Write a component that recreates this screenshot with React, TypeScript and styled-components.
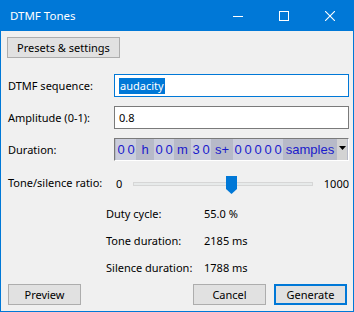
import styled, { createGlobalStyle } from "styled-components";

const GlobalStyle = createGlobalStyle`
  html, body {
    margin: 0;
    padding: 0;
    background: #f0f0f0;
  }
  body {
    font-family: "Noto Sans", "Liberation Sans", sans-serif;
    font-size: 11px;
    color: #000;
  }
  * {
    box-sizing: border-box;
  }
`;

const Window = styled.div`
  width: 354px;
  height: 312px;
  border: 1px solid #0078d7;
  border-top: none;
  background: #f0f0f0;
  display: flex;
  flex-direction: column;
`;

const TitleBar = styled.div`
  height: 31px;
  background: #0078d7;
  color: #fff;
  display: flex;
  align-items: center;
`;

const Title = styled.span`
  flex: 1;
  padding-left: 9px;
  font-size: 11.5px;
`;

const CaptionButton = styled.div`
  width: 46px;
  height: 31px;
  display: flex;
  align-items: center;
  justify-content: center;
`;

const Content = styled.div`
  flex: 1;
  display: flex;
  flex-direction: column;
  padding: 6px 4px 6px 6px;
`;

const Button = styled.button<{ $primary?: boolean; $width?: number }>`
  height: 21px;
  width: ${(p) => (p.$width ? `${p.$width}px` : "73px")};
  padding: 0;
  background: #e1e1e1;
  border: ${(p) => (p.$primary ? "2px solid #0078d7" : "1px solid #adadad")};
  font-family: inherit;
  font-size: 11px;
  color: #000;
  line-height: 1;
`;

const FormGrid = styled.div`
  margin-top: 16px;
  display: grid;
  grid-template-columns: 107px 235px;
  grid-template-rows: 23px 23px 23px 24px;
  row-gap: 9px;
  align-items: center;
`;

const Label = styled.span`
  padding-left: 1px;
  white-space: nowrap;
`;

const TextField = styled.div<{ $focused?: boolean }>`
  height: 23px;
  border: 1px solid ${(p) => (p.$focused ? "#0078d7" : "#7a7a7a")};
  background: #fff;
  display: flex;
  align-items: center;
  padding-left: 4px;
`;

const Selection = styled.span`
  background: #0078d7;
  color: #fff;
  line-height: 16px;
  padding: 0 1px;
`;

const Duration = styled.div`
  height: 23px;
  display: flex;
  border: 1px solid;
  border-color: #7a7a7a #ffffff #ffffff #7a7a7a;
  background: #b7bac8;
  font-family: "Liberation Sans", Arial, sans-serif;
  font-size: 13px;
  color: #1a1acb;
`;

const Digit = styled.span`
  width: 10px;
  background: #cacddb;
  display: flex;
  align-items: center;
  justify-content: center;
`;

const Unit = styled.span<{ $w: number }>`
  width: ${(p) => p.$w}px;
  display: flex;
  align-items: center;
  justify-content: center;
`;

const MenuArrow = styled.span`
  width: 10px;
  background: #d3d3d3;
  display: flex;
  justify-content: center;
  padding-top: 7px;
`;

const SliderRow = styled.div`
  display: flex;
  align-items: center;
  height: 24px;
  padding-top: 3px;
`;

const SliderMin = styled.span`
  width: 19px;
  padding-left: 2px;
`;

const Track = styled.div`
  position: relative;
  width: 180px;
  height: 4px;
  background: #e7eaea;
  border: 1px solid #d6d6d6;
`;

const Thumb = styled.svg`
  position: absolute;
  top: -7px;
  margin-left: -6px;
`;

const SliderMax = styled.span`
  flex: 1;
  text-align: right;
`;

const InfoGrid = styled.div`
  margin-top: 6px;
  margin-left: 99px;
  display: grid;
  grid-template-columns: 98px auto;
  grid-auto-rows: 27px;
  align-items: center;
`;

const Footer = styled.div`
  margin-top: auto;
  display: flex;
  align-items: center;
  gap: 8px;
  padding-left: 1px;
  padding-right: 2px;
`;

const Spacer = styled.div`
  flex: 1;
`;

function Digits({ value }: { value: string }) {
  return (
    <>
      {value.split("").map((d, i) => (
        <Digit key={i}>{d}</Digit>
      ))}
    </>
  );
}

export default function App() {
  const ratio = 550 / 1000;

  return (
    <>
      <GlobalStyle />
      <Window>
        <TitleBar>
          <Title>DTMF Tones</Title>
          <CaptionButton>
            <svg width="10" height="10" viewBox="0 0 10 10">
              <line x1="0" y1="5.5" x2="10" y2="5.5" stroke="#fff" strokeWidth="1" />
            </svg>
          </CaptionButton>
          <CaptionButton>
            <svg width="10" height="10" viewBox="0 0 10 10">
              <rect x="0.5" y="0.5" width="9" height="9" fill="none" stroke="#fff" strokeWidth="1" />
            </svg>
          </CaptionButton>
          <CaptionButton>
            <svg width="10" height="10" viewBox="0 0 10 10">
              <path d="M0 0 L10 10 M10 0 L0 10" stroke="#fff" strokeWidth="1.1" />
            </svg>
          </CaptionButton>
        </TitleBar>

        <Content>
          <Button $width={113}>Presets &amp; settings</Button>

          <FormGrid>
            <Label>DTMF sequence:</Label>
            <TextField $focused>
              <Selection>audacity</Selection>
            </TextField>

            <Label>Amplitude (0-1):</Label>
            <TextField>0.8</TextField>

            <Label>Duration:</Label>
            <Duration>
              <Unit $w={1} />
              <Digits value="00" />
              <Unit $w={18}>h</Unit>
              <Digits value="00" />
              <Unit $w={17}>m</Unit>
              <Digits value="30" />
              <Unit $w={22}>s+</Unit>
              <Digits value="00000" />
              <Unit $w={54}>samples</Unit>
              <MenuArrow>
                <svg width="7" height="4" viewBox="0 0 7 4">
                  <polygon points="0,0 7,0 3.5,4" fill="#000" />
                </svg>
              </MenuArrow>
            </Duration>

            <Label>Tone/silence ratio:</Label>
            <SliderRow>
              <SliderMin>0</SliderMin>
              <Track>
                <Thumb
                  width="11"
                  height="18"
                  viewBox="0 0 11 18"
                  style={{ left: `${ratio * 100}%` }}
                >
                  <polygon points="0,0 11,0 11,13 5.5,18 0,13" fill="#0078d7" />
                </Thumb>
              </Track>
              <SliderMax>1000</SliderMax>
            </SliderRow>
          </FormGrid>

          <InfoGrid>
            <span>Duty cycle:</span>
            <span>55.0 %</span>
            <span>Tone duration:</span>
            <span>2185 ms</span>
            <span>Silence duration:</span>
            <span>1788 ms</span>
          </InfoGrid>

          <Footer>
            <Button>Preview</Button>
            <Spacer />
            <Button>Cancel</Button>
            <Button $primary>Generate</Button>
          </Footer>
        </Content>
      </Window>
    </>
  );
}
